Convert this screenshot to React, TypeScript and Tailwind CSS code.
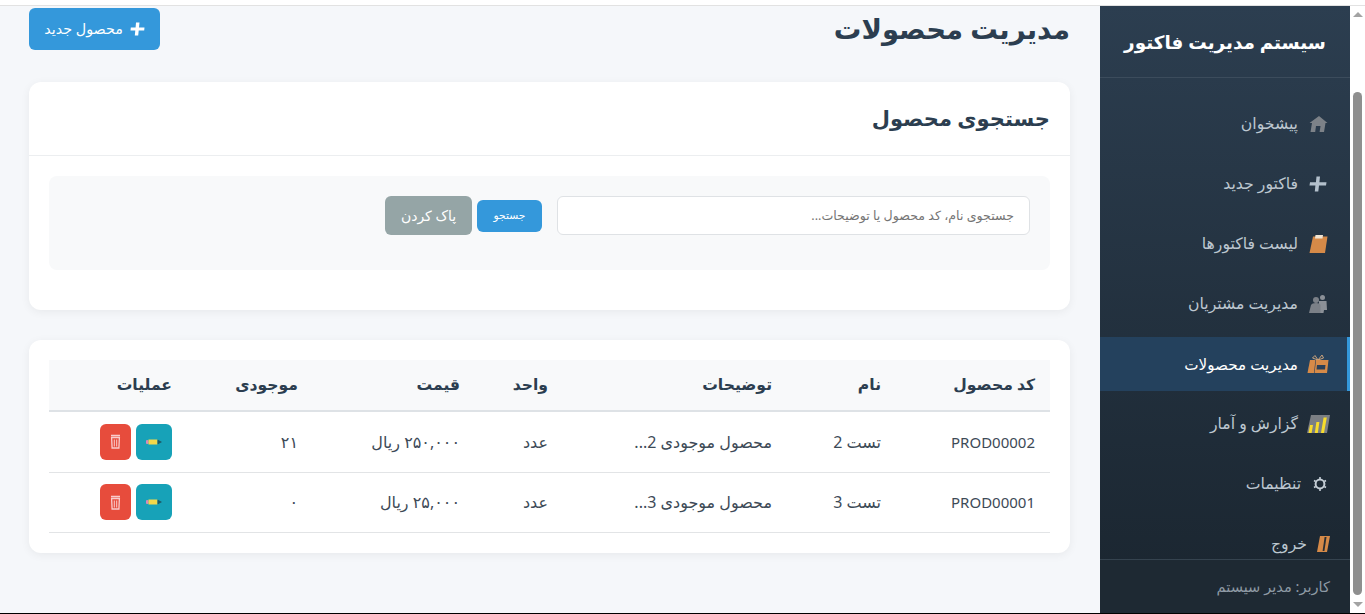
const navItems = [
  { label: "پیشخوان", icon: "home", iconWidth: "w-6" },
  { label: "فاکتور جدید", icon: "plus", iconWidth: "w-6" },
  { label: "لیست فاکتورها", icon: "clipboard", iconWidth: "w-6" },
  { label: "مدیریت مشتریان", icon: "users", iconWidth: "w-6" },
  { label: "مدیریت محصولات", icon: "box", iconWidth: "w-6", active: true },
  { label: "گزارش و آمار", icon: "chart", iconWidth: "w-6" },
  { label: "تنظیمات", icon: "gear", iconWidth: "w-[21px]" },
  { label: "خروج", icon: "door", iconWidth: "w-[15px]" },
];

const products = [
  { code: "PROD00002", name: "تست 2", desc: "محصول موجودی 2...", unit: "عدد", price: "۲۵۰,۰۰۰ ریال", stock: "۲۱" },
  { code: "PROD00001", name: "تست 3", desc: "محصول موجودی 3...", unit: "عدد", price: "۲۵,۰۰۰ ریال", stock: "۰" },
];

function NavIcon({ name }: { name: string }) {
  if (name === "home")
    return (
      <svg width="20" height="18" viewBox="0 0 20 18">
        <path d="M11 1 L19.5 8 L17.5 8 L16 17 L2.5 17 L4 8 L1.5 8 Z" fill="#7d8288" />
        <path d="M8 11 L12.5 11 L11.6 17 L7.2 17 Z" fill="#2a3a4b" />
      </svg>
    );
  if (name === "plus")
    return (
      <svg width="20" height="18" viewBox="0 0 20 18">
        <path d="M8.5 1.5 H12 L11.4 7.2 H18.5 L18 10.6 H11 L10.3 16.5 H6.8 L7.4 10.6 H1.5 L2 7.2 H7.9 Z" fill="#b3c0cc" />
      </svg>
    );
  if (name === "clipboard")
    return (
      <svg width="20" height="20" viewBox="0 0 20 20">
        <path d="M5 2.5 H19.5 L17 19 H1.5 Z" fill="#d68a48" />
        <path d="M7.5 1 H15 L14.5 4.5 H7 Z" fill="#f1e4d2" />
      </svg>
    );
  if (name === "users")
    return (
      <svg width="20" height="20" viewBox="0 0 20 20">
        <circle cx="14.5" cy="3.5" r="2.5" fill="#8b9097" />
        <path d="M11 7 H18.5 L19 16 H16 L15.5 19 H11 Z" fill="#8b9097" />
        <circle cx="8" cy="6" r="3" fill="#7b8087" />
        <path d="M1 19 L3 11 Q4 9 8 9 Q12 9 12.5 11 L12.5 19 Z" fill="#7b8087" />
      </svg>
    );
  if (name === "box")
    return (
      <svg width="22" height="20" viewBox="0 0 22 20">
        <path d="M8 1.5 L11 6 L5.5 4 Z M15 1 L11 6 L16.5 4 Z" fill="none" stroke="#c9a27c" strokeWidth="1" />
        <path d="M3 6 H21.5 L20 19 H0.5 Z" fill="#d68a48" />
        <path d="M10 11 H18.5 L18 15.5 H9.5 Z" fill="#2a4059" />
        <path d="M8.4 6 H9 L7.6 19 H7 Z" fill="#2a4059" />
      </svg>
    );
  if (name === "chart")
    return (
      <svg width="24" height="20" viewBox="0 0 24 20">
        <path d="M5 1 H24 L21 19 H1 Z" fill="#7b7f84" />
        <path d="M2.5 19 L4 11 H7 L5.6 19 Z M8.8 19 L10.4 8 H13.4 L11.8 19 Z M15 19 L17.6 3.5 H20.8 L18 19 Z" fill="#f7dc2c" />
      </svg>
    );
  if (name === "gear")
    return (
      <svg width="16" height="16" viewBox="0 0 16 16" fill="none" stroke="#c5ced6">
        <circle cx="8" cy="8" r="4.4" strokeWidth="2" />
        <path d="M8 1 V3 M8 13 V15 M2 4.5 L3.7 5.5 M12.3 10.5 L14 11.5 M2 11.5 L3.7 10.5 M12.3 5.5 L14 4.5" strokeWidth="1.6" />
      </svg>
    );
  return (
    <svg width="14" height="18" viewBox="0 0 14 18">
      <path d="M4 1 H14 L11 17 H1 Z" fill="#d68a48" />
      <path d="M8.6 2 H10.5 L8.4 16 H6.6 Z" fill="#2a2f33" />
    </svg>
  );
}

function TrashIcon() {
  return (
    <svg width="11" height="15" viewBox="0 0 11 15" fill="none" stroke="#f9cccc">
      <path d="M1 1.5 H10 M1.6 3.5 H9.4 L8.9 14 H2.1 Z" strokeWidth="1.3" />
      <path d="M4.3 5.5 V12.5 M6.7 5.5 V12.5" strokeWidth="1" />
    </svg>
  );
}

function PencilIcon() {
  return (
    <svg width="16" height="6" viewBox="0 0 16 6">
      <rect x="0" y="1" width="2.5" height="4" rx="1" fill="#d98ab8" />
      <rect x="2.5" y="0.5" width="9" height="5" fill="#f2d84a" />
      <path d="M11.5 .5 L16 3 L11.5 5.5 Z" fill="#1d5a66" />
    </svg>
  );
}

export default function App() {
  return (
    <div
      dir="rtl"
      className="flex h-[614px] w-full flex-col overflow-hidden bg-white text-[#2c3e50]"
      style={{ fontFamily: '"Noto Sans", "DejaVu Sans", sans-serif' }}
    >
      <div className="h-[6px] shrink-0 border-b border-[#e2e2e2] bg-white" />

      <div className="flex min-h-0 flex-1">
        {/* Scrollbar */}
        <div className="flex w-[15px] shrink-0 flex-col items-center bg-white">
          <div className="mt-[6px] h-0 w-0 border-x-[5px] border-b-[5px] border-x-transparent border-b-[#a3a3a3]" />
          <div className="mt-[75px] h-[503px] w-[9px] rounded-[5px] bg-[#8f8f8f]" />
          <div className="mt-[7px] h-0 w-0 border-x-[5px] border-t-[5px] border-x-transparent border-t-[#a3a3a3]" />
        </div>

        {/* Sidebar */}
        <aside className="flex w-[250px] shrink-0 flex-col bg-gradient-to-b from-[#2c3e50] to-[#1a252f]">
          <div className="flex h-[72px] shrink-0 items-center justify-center border-b border-[#3c4c5c]">
            <h1 className="text-[18.4px] font-bold text-white">سیستم مدیریت فاکتور</h1>
          </div>
          <nav className="min-h-0 flex-1 overflow-hidden pt-[19px]">
            {navItems.map((item) => (
              <a
                key={item.label}
                className={`mb-[6px] flex h-[54px] items-center gap-2 pr-5 ${
                  item.active
                    ? "border-r-[3px] border-[#3498db] bg-[#24415d] text-[15.2px] font-medium text-white"
                    : "text-[15.7px] text-[#bdc7d0]"
                }`}
              >
                <span className={`flex justify-center ${item.iconWidth} ${item.active ? "-mr-[3px]" : ""}`}>
                  <NavIcon name={item.icon} />
                </span>
                {item.label}
              </a>
            ))}
          </nav>
          <div className="flex h-[54px] shrink-0 items-center border-t border-[#35434f] bg-[#1e2933] pr-5 text-[14.6px] text-[#8e9aa5]">
            کاربر: مدیر سیستم
          </div>
        </aside>

        {/* Main */}
        <main className="min-w-0 flex-1 bg-[#f5f7fa] pl-[29px] pr-[30px] pt-[2px]">
          <div className="mb-8 flex h-[42px] items-center justify-between">
            <h2 className="text-[27.5px] font-bold text-[#2c3e50]">مدیریت محصولات</h2>
            <button className="flex h-[42px] w-[131px] items-center justify-center gap-[7px] rounded-md bg-[#3498db] text-[14.3px] text-white">
              <svg width="15" height="14" viewBox="0 0 15 14">
                <path d="M6 0.5 H9.5 L9 5.4 H14.5 L14.2 8.4 H8.7 L8.2 13.5 H4.8 L5.3 8.4 H0.5 L0.8 5.4 H5.6 Z" fill="#fff" />
              </svg>
              محصول جدید
            </button>
          </div>

          <section className="mb-[30px] rounded-xl bg-white shadow-[0_2px_10px_rgba(0,0,0,0.06)]">
            <div className="flex h-[74px] items-center border-b border-[#eceef0] px-5">
              <h3 className="text-[21px] font-bold text-[#2c3e50]">جستجوی محصول</h3>
            </div>
            <div className="p-5 pb-10">
              <div className="flex items-center rounded-lg bg-[#f8f9fa] p-5 pb-[35px]">
                <input
                  placeholder="جستجوی نام، کد محصول یا توضیحات..."
                  className="h-[39px] w-[473px] rounded-md border border-[#dfe2e5] bg-white px-[15px] text-[12.6px] placeholder:text-[#757575]"
                />
                <button className="mr-[15px] h-8 w-[65px] rounded-md bg-[#3498db] text-[10.7px] text-white">جستجو</button>
                <button className="mr-[5px] h-[39px] w-[87px] rounded-md bg-[#95a5a6] text-[14px] text-white">پاک کردن</button>
              </div>
            </div>
          </section>

          <section className="rounded-xl bg-white p-5 shadow-[0_2px_10px_rgba(0,0,0,0.06)]">
            <table className="w-full table-fixed border-collapse text-right text-[16px]">
              <colgroup>
                <col className="w-[154px]" />
                <col className="w-[109px]" />
                <col className="w-[224px]" />
                <col className="w-[88px]" />
                <col className="w-[162px]" />
                <col className="w-[126px]" />
                <col />
              </colgroup>
              <thead>
                <tr className="h-[51px] border-b-2 border-[#dee2e6] bg-[#f8f9fa] text-[15.6px]">
                  <th className="px-[15px] font-semibold">کد محصول</th>
                  <th className="px-[15px] font-semibold">نام</th>
                  <th className="px-[15px] font-semibold">توضیحات</th>
                  <th className="px-[15px] font-semibold">واحد</th>
                  <th className="px-[15px] font-semibold">قیمت</th>
                  <th className="px-[15px] font-semibold">موجودی</th>
                  <th className="px-[15px] font-semibold">عملیات</th>
                </tr>
              </thead>
              <tbody>
                {products.map((p, i) => (
                  <tr key={p.code} className={`border-b border-[#e2e4e6] text-[#3d4a57] ${i === 0 ? "h-[61px]" : "h-[60px]"}`}>
                    <td className="px-[15px] text-[15px]">{p.code}</td>
                    <td className="px-[15px]">{p.name}</td>
                    <td className="px-[15px]">{p.desc}</td>
                    <td className="px-[15px]">{p.unit}</td>
                    <td className="px-[15px]">{p.price}</td>
                    <td className="px-[15px]">{p.stock}</td>
                    <td className="px-[15px]">
                      <div className="flex gap-[5px]">
                        <button className="flex h-[36px] w-[36px] items-center justify-center rounded-md bg-[#17a2b8]">
                          <PencilIcon />
                        </button>
                        <button className="flex h-[36px] w-[31px] items-center justify-center rounded-md bg-[#e74c3c]">
                          <TrashIcon />
                        </button>
                      </div>
                    </td>
                  </tr>
                ))}
              </tbody>
            </table>
          </section>
        </main>
      </div>

      <div className="h-px shrink-0 bg-black" />
    </div>
  );
}
